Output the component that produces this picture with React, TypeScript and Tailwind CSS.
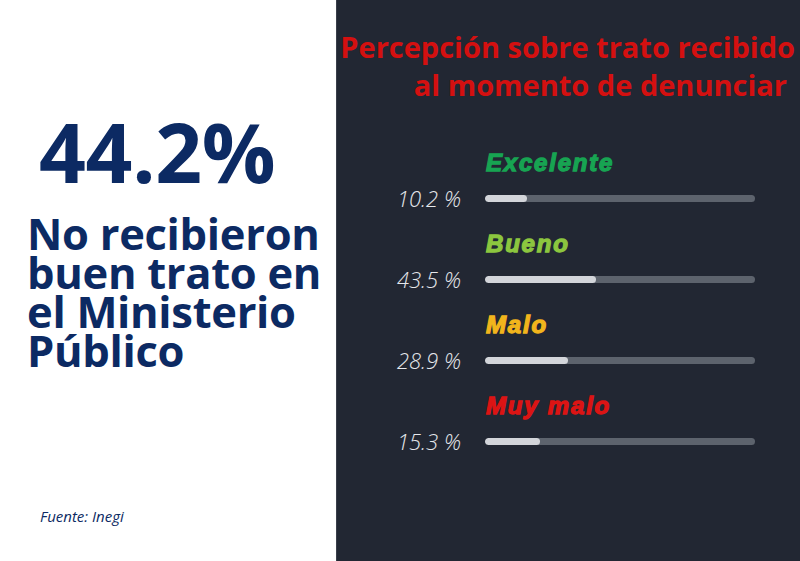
import React from 'react';

const NAVY = '#0c2a63';

const rows = [
    { label: 'Excelente', value: '10.2 %', color: '#17a452', fill: 42 },
    { label: 'Bueno', value: '43.5 %', color: '#8cc63f', fill: 111 },
    { label: 'Malo', value: '28.9 %', color: '#f2b51c', fill: 83 },
    { label: 'Muy malo', value: '15.3 %', color: '#dc1414', fill: 55 },
];

const StatRow = ({ label, value, color, fill }: typeof rows[number]) => (
    <div className="flex flex-col h-[81px]">
        <div className="pl-[149px] h-[40px] flex items-center">
            <span
                className="text-[24px] font-bold italic leading-none tracking-[1.8px] [-webkit-text-stroke:1.3px_currentColor]"
                style={{ color, fontFamily: '"Liberation Sans", Arial, sans-serif' }}
            >
                {label}
            </span>
        </div>
        <div className="flex items-center h-[30px]">
            <span
                className="w-[124px] text-right text-[22px] font-light italic text-[#e6e8ec] leading-none"
                style={{ fontFamily: '"Open Sans", sans-serif' }}
            >
                {value}
            </span>
            <div className="ml-[24px] w-[270px] h-[7px] rounded-full bg-[#5d636d] overflow-hidden">
                <div className="h-full rounded-full bg-[#d3d5da]" style={{ width: fill }} />
            </div>
        </div>
    </div>
);

export default function App() {
    return (
        <div className="flex w-[800px] h-[561px] bg-white" style={{ fontFamily: '"Open Sans", sans-serif' }}>
            {/* left panel */}
            <div className="w-[336px] h-full flex flex-col pt-[110px] pl-[27px] pb-[34px]">
                <div className="text-[82px] font-bold leading-none pl-[12px] tracking-[-0.3px]" style={{ color: NAVY }}>
                    44.2%
                </div>
                <div className="mt-[22px] text-[43.5px] font-bold leading-[39px] tracking-[-0.3px]" style={{ color: NAVY }}>
                    No recibieron<br />
                    buen trato en<br />
                    el Ministerio<br />
                    Público
                </div>
                <div className="mt-auto pl-[13px] text-[15px] italic" style={{ color: NAVY }}>
                    Fuente: Inegi
                </div>
            </div>

            {/* right panel */}
            <div className="flex-1 h-full bg-[#222733] border-l border-[#3a3f4a] flex flex-col">
                <div className="pt-[28px] pr-[5px] text-right text-[29px] font-bold leading-[38px] text-[#d41010] whitespace-nowrap">
                    Percepción sobre trato recibido<br />
                    <span className="pr-[8px]">al momento de denunciar</span>
                </div>
                <div className="mt-[39px] flex flex-col">
                    {rows.map(r => (
                        <StatRow key={r.label} {...r} />
                    ))}
                </div>
            </div>
        </div>
    );
}
